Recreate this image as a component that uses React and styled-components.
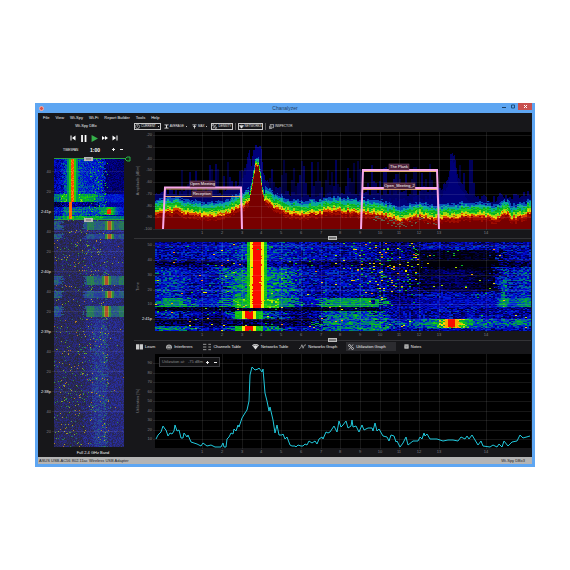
import React from "react";
import styled, { createGlobalStyle } from "styled-components";

const channels = [
	[1, 47],
	[2, 67],
	[3, 87],
	[4, 106],
	[5, 126],
	[6, 146],
	[7, 166],
	[8, 185],
	[9, 205],
	[10, 225],
	[11, 244],
	[12, 264],
	[13, 284],
	[14, 331],
];

const menuItems = ["File", "View", "Wi-Spy", "Wi-Fi", "Report Builder", "Tools", "Help"];

// helpers

// repeatable noise, so every render draws the same signal
function noise(x, y, seed = 0) {
	let h = (x * 374761393 + y * 668265263 + seed * 974634777) | 0;
	h = Math.imul(h ^ (h >>> 13), 1274126177);
	h = Math.imul(h ^ (h >>> 15), 2246822519);
	return ((h ^ (h >>> 16)) >>> 0) / 4294967296;
}

function curve(points, x) {
	if (x <= points[0][0]) return points[0][1];
	for (let i = 1; i < points.length; i++) {
		const [x0, y0] = points[i - 1];
		const [x1, y1] = points[i];
		if (x <= x1) return y0 + ((y1 - y0) * (x - x0)) / (x1 - x0);
	}
	return points[points.length - 1][1];
}

const within = (v, a, b) => v >= a && v < b;
const bump = (x, c, w) => Math.exp(-((x - c) * (x - c)) / (w * w));

const stops = [
	[0, [0, 0, 8]],
	[0.12, [0, 0, 70]],
	[0.25, [0, 0, 165]],
	[0.36, [0, 20, 225]],
	[0.46, [0, 100, 160]],
	[0.56, [0, 160, 70]],
	[0.68, [20, 205, 10]],
	[0.78, [240, 240, 0]],
	[0.88, [255, 130, 0]],
	[1, [250, 10, 0]],
];

function heat(v) {
	const rgb = [0, 1, 2].map((i) =>
		Math.round(curve(stops.map(([s, c]) => [s, c[i]]), v))
	);
	return `rgb(${rgb.join(",")})`;
}

const heatCache = {};
function heatColor(v) {
	const key = Math.round(Math.max(0, Math.min(1, v)) * 32);
	if (!heatCache[key]) heatCache[key] = heat(key / 32);
	return heatCache[key];
}

// one path per colour, equal neighbours in a row are joined
function buildRaster(width, height, colorAt) {
	const paths = {};
	for (let y = 0; y < height; y++) {
		let start = 0;
		let color = colorAt(0, y);
		for (let x = 1; x <= width; x++) {
			const next = x < width ? colorAt(x, y) : null;
			if (next !== color) {
				if (color) {
					paths[color] = (paths[color] || "") + `M${start} ${y}h${x - start}v1h${start - x}z`;
				}
				start = x;
				color = next;
			}
		}
	}
	return Object.entries(paths);
}

const floorLine = [
	[0, 82], [10, 80], [22, 79], [32, 82], [45, 84], [62, 84], [72, 81], [80, 77],
	[88, 75], [94, 68], [97, 52], [98, 46], [100, 35], [103, 33], [105, 45], [107, 61],
	[109, 68], [116, 73], [126, 79], [136, 82], [150, 83], [165, 81], [180, 79],
	[192, 80], [206, 81], [222, 82], [234, 85], [246, 88], [256, 86], [264, 84],
	[275, 87], [300, 85], [330, 85], [344, 87], [349, 81], [352, 82], [355, 87],
	[365, 85], [376, 81],
];
const blueLine = [
	[0, 62], [8, 58], [24, 60], [50, 62], [70, 60], [85, 50], [91, 30], [94, 19], [96, 36],
	[98, 16], [106, 15], [108, 42], [115, 55], [140, 62], [190, 62], [245, 61], [280, 58],
	[290, 52], [294, 40], [295, 23], [299, 22], [301, 38], [305, 52], [316, 64], [340, 67],
	[346, 62], [352, 65], [365, 62], [376, 60],
];

function densityColor(x, y) {
	const col = x >> 1;
	const floor = curve(floorLine, x) + (noise(col, 1) - 0.5) * 3;
	const peak = within(x, 94, 110);
	const band = peak ? 7 : 12;
	const depth = y - floor;
	if (depth > 0) {
		if (x > 215 && x < 282 && depth < 7 && noise(col, y, 5) < 0.16) return "#60604a";
		return depth > 4 || peak ? "#780000" : noise(col, y, 3) > 0.5 ? "#a00c00" : "#8a0000";
	}
	const v = -depth + (noise(col, y, 2) - 0.5) * 3;
	if (v < band * 0.14) return "#d84000";
	if (v < band * 0.26) return "#e8d000";
	if (v < band * 0.4) return "#98d810";
	if (v < band * 0.76) return noise(col, y, 8) > 0.4 ? "#08b020" : "#20cc28";
	if (v < band) return "#08a898";
	if (v < band * 1.2) return "#0850b8";
	const top = curve(blueLine, x) + (noise(col, 7) - 0.5) * 6;
	if (y > top) return y > top + 7 || peak ? "#000078" : "#000064";
	const inSpikes = within(x, 26, 90) || within(x, 110, 284) || within(x, 304, 322);
	if (inSpikes && noise(col, 11) > 0.38 && y > 27 + noise(col, 12) * 28) {
		return noise(col, 14) > 0.5 ? "#00005a" : "#00003c";
	}
	return null;
}

function waterfallColor(px, y) {
	const n = noise(px >> 1, y, 21);
	const n2 = noise(px, y, 22);
	const row = noise(3, y, 23);
	// ragged borders between the busy and the quiet areas
	const x = px + (noise(px >> 2, y, 24) - 0.5) * 22;
	let v = 0.26 + (row - 0.5) * 0.1;
	let amp = 0.32;

	if (y < 56) {
		v += 0.12 * bump(x, 104, 38);
		if (y > 25) v += within(x, 70, 136) ? 0.13 : within(x, 0, 26) ? 0.1 : 0;
		if (within(y, 18, 25)) v -= 0.11;
		if (x > 225 && x < 265) v -= 0.09;
		if (within(x, 262, 343) && within(y, 8, 50)) {
			v -= within(x, 272, 320) && y > 26 ? 0.14 : 0.22;
			amp = 0.18;
		}
		if (y > 24) v += 0.16 * bump(px, 348, 5) + 0.1 * bump(px, 370, 10);
	} else if (y < 65) {
		v += within(x, 0, 34) || within(x, 70, 140) ? 0.27 : 0.02;
		if (within(x, 34, 70)) v += 0.06;
		if (within(x, 165, 226)) v += 0.27;
		if (within(x, 226, 262)) v -= 0.08;
		v += 0.28 * bump(px, 348, 6) + 0.26 * bump(px, 370, 12);
		amp = 0.2;
	} else if (y < 69) {
		v -= x < 225 ? 0.22 : 0.03;
	} else if (y < 77) {
		v += within(x, 0, 30) ? 0.14 : 0;
		v += within(x, 75, 126) ? 0.2 : 0;
		v += within(x, 170, 225) ? 0.2 : 0;
		if (row > 0.5 && x < 165) v -= 0.13;
	} else if (y < 84) {
		if (x < 165) v -= 0.16;
		if (within(x, 165, 230)) v += 0.2;
		if (x > 225) v += 0.16 * bump(x, 370, 20);
	} else {
		v += within(x, 0, 35) || within(x, 75, 126) ? 0.22 : 0;
		if (within(x, 170, 230)) v += 0.2;
	}
	if (within(y, 77, 86) && px > 215) v += 0.24 * bump(px, 297, 60) + 0.34 * bump(px, 297, 14);

	v += (n - 0.5) * amp;

	if (y < 66) {
		const d = Math.abs(px - 101.5);
		if (d < 4 + (n2 > 0.8 ? 1 : 0)) v = 1;
		else if (d < 7) v = 0.79;
		else if (d < 10) v = 0.6 + n * 0.1;
		else if (y > 56 && d < 22) v = 0.64 + (n - 0.5) * 0.25;
	} else if (within(y, 69, 77) || y > 83) {
		const d = Math.abs(px - 93.5);
		if (d < 4) v = 1;
		else if (d < 7) v = 0.78;
		else if (d < 14) v = 0.58 + n * 0.12;
	}
	if (within(y, 77, 85)) {
		const d = Math.abs(px - 296);
		if (d < 4) v = 1;
		else if (d < 7) v = 0.84;
	}

	const spark = noise(px >> 1, y, 31);
	const busy = within(x, 190, 265) && y < 50 ? 0.07 : x > 262 ? 0.006 : 0.012;
	if (spark < busy) return heatColor(0.55 + noise(px >> 1, y, 32) * 0.35);
	return heatColor(v);
}

function overviewColor(px, y) {
	const n = noise(px, y, 41);
	const x = px + (noise(px >> 1, y, 42) - 0.5) * 5;
	let v = 0.27;
	let amp = 0.22;
	if (y < 61) {
		if (within(x, 8, 30)) v += 0.14;
		if (within(x, 30, 50)) v += 0.1;
		if (x > 50) {
			v -= y < 36 ? 0.09 : 0;
			amp = 0.12;
		}
		if (within(y, 36, 44)) v += x < 42 ? 0.22 : 0.08;
		if (within(y, 44, 49)) v -= x < 44 ? 0.16 : 0;
		if (within(y, 49, 57)) v += 0.06 + 0.35 * bump(px, 55, 7);
		if (y > 57) v += 0.22;
		v += (n - 0.5) * amp;
		const d = Math.abs(px - (y < 44 ? 18 : 16));
		if (y < 44 || y > 57) {
			if (d < 2) v = n > 0.5 ? 0.94 : 0.86;
			else if (d < 4) v = 0.68;
			else if (d < 6) v = 0.54;
		} else if (d < 2) v = 0.9;
		if (within(y, 51, 56) && within(px, 53, 57)) v = 0.97;
		if (within(px, 34, 54) && n > 0.94) v = 0.68;
		return heatColor(v);
	}
	const bands = [
		[63, 72, 1],
		[76, 81, 0.4],
		[118, 127, 1],
		[133, 140, 0.5],
		[148, 159, 1],
	];
	const hit = bands.find(([a, b]) => within(y, a, b));
	v = 0.14 + (x > 50 ? 0.09 : 0);
	if (within(x, 30, 52)) v += 0.07;
	if (y > 160 && within(x, 38, 52)) v += 0.12;
	v += (n - 0.5) * 0.26;
	if (hit) {
		const s = hit[2];
		const late = y > 115;
		const center = late && s === 1 ? 52 : 55;
		if (x < 8) v = 0.34 + n * 0.2;
		if (x >= 30) v = 0.36 + 0.1 * s + (n - 0.5) * 0.12;
		if (within(px, 33, 40)) v += 0.1 * s;
		if (px > 64) v += 0.08 * s;
		if (Math.abs(px - center) < 5) v = 0.64;
		if (Math.abs(px - center) < 3) v = 0.76;
		if (Math.abs(px - center) < 2) v = 0.95;
		return heatColor(v);
	}
	const limit = x < 53 ? 0.045 : 0.008;
	if (noise(px, y, 43) < limit) v = 0.5 + noise(px, y, 44) * 0.4;
	return heatColor(v);
}

const densityCells = buildRaster(376, 97, densityColor);
const waterfallCells = buildRaster(376, 89, waterfallColor);
const overviewCells = buildRaster(70, 289, overviewColor);

const utilization =
	"1,85 3,81 6,78 8,72 10,75 11,76 13,82 15,79 17,80 19,77 20,71 22,77 24,76 26,84 28,84 29,79 32,83 33,81 36,88 39,89 42,90 46,92 48,89 52,92 56,91 60,93 65,93 66,93 68,89 69,93 71,93 72,85 74,83 76,79 78,80 79,75 81,77 83,71 84,73 87,64 90,59 92,56 94,47 95,21 97,13 100,16 103,15 104,14 107,18 108,15 110,39 112,47 114,57 115,53 118,66 120,79 122,71 124,81 127,81 128,80 130,85 132,83 135,91 137,92 140,92 141,93 143,91 146,92 148,92 150,90 152,91 154,87 157,89 160,87 162,90 164,85 167,83 168,85 171,78 173,79 175,78 179,72 182,78 184,67 186,73 188,71 191,67 193,74 196,72 197,66 198,73 201,72 204,78 207,71 209,76 213,74 217,74 218,77 220,69 222,77 224,75 228,82 232,83 234,87 236,81 239,82 241,88 242,87 245,93 248,89 251,83 253,91 258,87 263,87 265,83 267,85 269,79 270,82 272,80 275,85 282,85 288,87 293,86 298,86 303,87 306,83 310,85 312,82 314,85 317,81 320,86 323,91 326,87 328,92 335,93 338,91 342,93 344,90 347,93 349,87 353,92 357,88 362,87 365,81 368,84 375,82";

const networks = [
	{ name: "Open Meeting", x: 35, y: 49, w: 25 },
	{ name: "Reception", x: 37, y: 59, w: 20 },
	{ name: "The Plank", x: 234, y: 32, w: 20 },
	{ name: "Open_Meeting_2", x: 229, y: 51, w: 31 },
];

// charts

function Cells({ cells }) {
	return (
		<g shapeRendering="crispEdges">
			{cells.map(([color, d]) => (
				<path key={color} d={d} fill={color} />
			))}
		</g>
	);
}

function Axes({ height, rows, unit, label }) {
	return (
		<g>
			<g stroke="#fff" strokeOpacity="0.09" shapeRendering="crispEdges">
				{rows.map(([text, y]) => (
					<path key={text} d={`M-2 ${y}H376`} />
				))}
				{channels.map(([ch, x]) => (
					<path key={ch} d={`M${x} 0V${height + 1}`} />
				))}
			</g>
			{rows.map(([text, y]) => (
				<AxisText key={text} x="-3" y={y + 1} textAnchor="end" $bright={text === unit}>
					{text}
				</AxisText>
			))}
			{channels.map(([ch, x]) => (
				<AxisText key={ch} x={x} y={height + 5} textAnchor="middle">
					{ch}
				</AxisText>
			))}
			<AxisText transform={`translate(-16 ${height / 2}) rotate(-90)`} textAnchor="middle">
				{label}
			</AxisText>
		</g>
	);
}

function DensityChart() {
	const rows = [-20, -30, -40, -50, -60, -70, -80, -90, -100].map((v, i) => [
		v,
		Math.round(3 + i * 11.75),
	]);
	return (
		<Chart viewBox="-21 -1 397 105" role="img" aria-label="Density">
			<rect width="376" height="97" fill="#000" />
			<Cells cells={densityCells} />
			<Axes height={97} rows={rows} label="Amplitude [dBm]" />
			<g fill="none" stroke="#e5b070">
				<path d="M10 57H86M10 64.5H86M207 39.5H282M207 57.5H282" />
			</g>
			<g fill="none" stroke="#f9a8ea" strokeWidth="2">
				<path d="M8 97L10 55.5H86L87 97" />
				<path d="M206 97L208 38H282L284 97M207 56H282" />
			</g>
			{networks.map(({ name, x, y, w }) => (
				<g key={name}>
					<rect x={x} y={y} width={w} height="6" fill="#4a2038" stroke="#80506c" strokeWidth="0.5" />
					<NetworkText x={x + w / 2} y={y + 4} textAnchor="middle">
						{name}
					</NetworkText>
				</g>
			))}
		</Chart>
	);
}

function WaterfallChart() {
	const rows = [[50, 3], [40, 18], [30, 33], [20, 48], [10, 62], ["2:41p", 77]];
	return (
		<Chart viewBox="-21 -2 397 98" role="img" aria-label="Waterfall">
			<Cells cells={waterfallCells} />
			<Axes height={89} rows={rows} unit="2:41p" label="Time" />
		</Chart>
	);
}

function UtilizationChart() {
	const rows = [90, 80, 70, 60, 50, 40, 30, 20, 10].map((v, i) => [v, Math.round(9 + i * 9.5)]);
	return (
		<Chart viewBox="-21 -2 397 105" role="img" aria-label="Utilization">
			<rect width="376" height="94" fill="#000" />
			<Axes height={94} rows={rows} label="Utilization [%]" />
			<polyline points={utilization} fill="none" stroke="#20c8dc" />
		</Chart>
	);
}

function Overview() {
	const labels = ["40", "20", "2:41p", "40", "20", "2:40p", "40", "20", "2:39p", "40", "20", "2:38p", "40", "20"];
	return (
		<Chart viewBox="-16 -3 96 293" role="img" aria-label="Session overview">
			<Cells cells={overviewCells} />
			<rect y="62" width="70" height="227" fill="#58585f" fillOpacity="0.46" />
			{labels.map((text, i) => (
				<g key={i}>
					<path d={`M-2 ${13.5 + i * 20}H70`} stroke="#fff" strokeOpacity="0.08" />
					<AxisText x="-3" y={15 + i * 20} textAnchor="end" $bright={text.includes("p")}>
						{text}
					</AxisText>
				</g>
			))}
			<path d="M0 0.5H73M0 61.5H70" stroke="#28a040" />
			<path d="M76 -1H73L71 1L73 3H76Z" fill="#102c18" stroke="#28b048" />
			<g fill="#b8b8b8">
				<rect x="30" y="-1" width="9" height="4" />
				<rect x="30" y="60" width="9" height="4" />
			</g>
			<path d="M32 1H37M32 62H37" stroke="#666" />
		</Chart>
	);
}

// icons

const icons = {
	clock: (
		<g fill="none" stroke="#ddd" strokeWidth="1.4">
			<circle cx="6" cy="6" r="5" />
			<path d="M6 3V6L8 8" />
		</g>
	),
	average: <path d="M1 1H11V3H8L7 6L8 9H11V11H1V9H4L5 6L4 3H1Z" fill="#ddd" />,
	max: <path d="M1 1H11V3H1ZM6 3L10 7H7V11H5V7H2Z" fill="#ddd" />,
	percent: (
		<g fill="none" stroke="#ddd" strokeWidth="1.5">
			<circle cx="3" cy="3" r="2" />
			<circle cx="9" cy="9" r="2" />
			<path d="M10 1L2 11" />
		</g>
	),
	wifi: (
		<g fill="#ddd">
			<path d="M0 4Q6 -1 12 4L6 11Z" />
			<path d="M2 5Q6 2 10 5" fill="none" stroke="#333" />
		</g>
	),
	inspector: (
		<g fill="none" stroke="#ddd" strokeWidth="1.5">
			<path d="M3 1H11V9H3Z" />
			<path d="M1 5V11H7M5 5H8" />
		</g>
	),
	book: (
		<g fill="#ccc">
			<path d="M0 2H5.5V11H0ZM6.5 2H12V11H6.5Z" />
		</g>
	),
	interferer: (
		<g>
			<path d="M0 7A6 6 0 0 1 12 7V9H0Z" fill="#aaa" />
			<path d="M3 7A3 3 0 0 1 9 7M2 11H10" fill="none" stroke="#555" strokeWidth="1.4" />
		</g>
	),
	list: <path d="M0 2H5M0 6H5M0 10H5M8 2H12M8 6H12M8 10H12" stroke="#aaa" strokeWidth="1.3" />,
	graph: <path d="M0 10L3 8L5 3L7 9L9 4L12 3" fill="none" stroke="#bbb" strokeWidth="1.2" />,
	notes: (
		<g>
			<path d="M1 1H11V11H1Z" fill="#ddd" />
			<path d="M1 3H11M3 6H9M3 8H9" stroke="#333" />
		</g>
	),
	prev: <path d="M1 1H3V11H1ZM11 1V11L4 6Z" fill="#fff" />,
	pause: <path d="M2 0H5V12H2ZM8 0H11V12H8Z" fill="#fff" />,
	play: <path d="M1 0L12 6L1 12Z" fill="#35b04a" />,
	forward: <path d="M0 2L6 6L0 10ZM6 2L12 6L6 10Z" fill="#fff" />,
	next: <path d="M1 1L8 6L1 11ZM9 1H11V11H9Z" fill="#fff" />,
};

function Icon({ name, size = 5 }) {
	return (
		<svg width={size} height={size} viewBox="0 0 12 12" aria-hidden="true">
			{icons[name]}
		</svg>
	);
}

function Stepper() {
	return (
		<Steps>
			<PlainButton aria-label="Increase">
				<svg width="3" height="3" viewBox="0 0 3 3">
					<path d="M1.5 0V3M0 1.5H3" stroke="#eee" />
				</svg>
			</PlainButton>
			<PlainButton aria-label="Decrease">
				<svg width="3" height="3" viewBox="0 0 3 3">
					<path d="M0 1.5H3" stroke="#eee" />
				</svg>
			</PlainButton>
		</Steps>
	);
}

function Divide() {
	return (
		<Splitter>
			<Grip />
		</Splitter>
	);
}

function App() {
	return (
		<Page>
			<GlobalStyle />
			<Window>
				<TitleBar>
					<AppMark />
					<h1>Chanalyzer</h1>
					<WindowButtons>
						<WindowButton aria-label="Minimize">
							<svg width="4" height="5" viewBox="0 0 4 5">
								<path d="M0 3.5H4" stroke="#1c3f66" />
							</svg>
						</WindowButton>
						<WindowButton aria-label="Maximize">
							<svg width="4" height="5" viewBox="0 0 4 5">
								<path d="M0.5 1H3.5V4H0.5Z" fill="none" stroke="#1c4f7c" />
							</svg>
						</WindowButton>
						<WindowButton aria-label="Close" $close>
							<svg width="3" height="3" viewBox="0 0 3 3">
								<path d="M0 0L3 3M3 0L0 3" stroke="#fff" />
							</svg>
						</WindowButton>
					</WindowButtons>
				</TitleBar>
				<Content>
					<Menu>
						{menuItems.map((item) => (
							<PlainButton key={item}>{item}</PlainButton>
						))}
					</Menu>
					<Columns>
						<Sidebar>
							<Device>Wi-Spy DBx</Device>
							<Player>
								<PlainButton aria-label="Previous"><Icon name="prev" size={6} /></PlainButton>
								<PlainButton aria-label="Pause"><Icon name="pause" size={7} /></PlainButton>
								<PlainButton aria-label="Play"><Icon name="play" size={7} /></PlainButton>
								<PlainButton aria-label="Fast forward"><Icon name="forward" size={6} /></PlainButton>
								<PlainButton aria-label="Next"><Icon name="next" size={6} /></PlainButton>
							</Player>
							<Timespan>
								<small>TIMESPAN</small>
								<strong>1:00</strong>
								<Stepper />
							</Timespan>
							<Overview />
							<Band>Full 2.4 GHz Band</Band>
						</Sidebar>
						<Main>
							<Toolbar>
								<Tool $boxed><Icon name="clock" />CURRENT<Caret /></Tool>
								<Tool><Icon name="average" />AVERAGE<Caret /></Tool>
								<Tool><Icon name="max" />MAX<Caret /></Tool>
								<Tool $boxed><Icon name="percent" />DENSITY</Tool>
								<Divider />
								<Tool $boxed><Icon name="wifi" />NETWORKS</Tool>
								<Divider />
								<Tool><Icon name="inspector" />INSPECTOR</Tool>
							</Toolbar>
							<DensityChart />
							<Divide />
							<WaterfallChart />
							<Divide />
							<Tabs>
								<Tab><Icon name="book" size={7} />Learn</Tab>
								<Tab><Icon name="interferer" size={6} />Interferers</Tab>
								<Tab><Icon name="list" size={8} />Channels Table</Tab>
								<Tab><Icon name="wifi" size={7} />Networks Table</Tab>
								<Tab><Icon name="graph" size={7} />Networks Graph</Tab>
								<Tab $active><Icon name="percent" size={6} />Utilization Graph</Tab>
								<Tab><Icon name="notes" />Notes</Tab>
							</Tabs>
							<ChartArea>
								<UtilizationChart />
								<Threshold>
									<span>Utilization at:</span>
									<span>-75 dBm</span>
									<Stepper />
								</Threshold>
							</ChartArea>
						</Main>
					</Columns>
				</Content>
				<StatusBar>
					<span>ASUS USB-AC56 802.11ac Wireless USB Adapter</span>
					<span>Wi-Spy DBx3</span>
				</StatusBar>
			</Window>
		</Page>
	);
}

const GlobalStyle = createGlobalStyle`
	* {
		box-sizing: border-box;
	}
	body {
		margin: 0;
		background: #fff;
	}
	button {
		font-family: inherit;
	}
	svg {
		display: block;
		flex: none;
	}
`;

const Page = styled.div`
	padding: 103px 35px;
`;
const Window = styled.div`
	background: #5ea6f2;
	padding: 0 3px 3px;
	color: #f0f0f0;
	font-family: "Liberation Sans", sans-serif;
	font-size: 4px;
	line-height: 6px;
`;
const TitleBar = styled.header`
	display: grid;
	grid-template-columns: 1fr auto 1fr;
	align-items: center;
	height: 10px;
	h1 {
		margin: 0;
		color: #24405f;
		font-size: 5px;
		font-weight: 400;
	}
`;
const AppMark = styled.span`
	width: 5px;
	height: 5px;
	margin-left: 1px;
	border: 1px solid #f6b0a8;
	border-radius: 50%;
	background: #d85048;
`;
const WindowButtons = styled.div`
	display: flex;
	justify-content: flex-end;
	align-self: start;
	gap: 2px;
`;
const WindowButton = styled.button`
	display: flex;
	align-items: center;
	justify-content: center;
	width: ${(props) => (props.$close ? "14px" : "7px")};
	height: 7px;
	padding: 0;
	border: none;
	background: ${(props) => (props.$close ? "#c8504e" : "transparent")};
`;
const Content = styled.div`
	background: #17171a;
	padding-right: 1px;
`;
const PlainButton = styled.button`
	padding: 0;
	border: none;
	background: none;
	color: inherit;
	font-size: 4px;
	line-height: 6px;
	cursor: pointer;
`;
const Menu = styled.nav`
	display: flex;
	gap: 6px;
	padding: 2px 5px 0;
	height: 8px;
`;
const Columns = styled.div`
	display: grid;
	grid-template-columns: 96px 1fr;
`;
const Sidebar = styled.aside`
	display: flex;
	flex-direction: column;
	text-align: center;
`;
const Device = styled.div`
	padding-top: 2px;
	height: 11px;
`;
const Player = styled.div`
	display: flex;
	align-items: center;
	justify-content: center;
	gap: 4px;
	height: 12px;
	padding-left: 15px;
`;
const Timespan = styled.div`
	display: flex;
	align-items: center;
	justify-content: space-between;
	height: 11px;
	padding: 0 11px 0 25px;
	small {
		font-size: 3px;
	}
	strong {
		color: #fff;
		font-size: 5px;
	}
`;
const Steps = styled.span`
	display: flex;
	gap: 5px;
`;
const Band = styled.div`
	padding-left: 14px;
	line-height: 9px;
`;
const Main = styled.main`
	min-width: 0;
`;
const Toolbar = styled.div`
	display: flex;
	align-items: center;
	gap: 2px;
	height: 10px;
`;
const Tool = styled.button`
	display: flex;
	align-items: center;
	gap: 1px;
	height: 7px;
	padding: 0;
	border: 1px solid ${(props) => (props.$boxed ? "#c8c8c8" : "transparent")};
	background: none;
	color: #e4e4e4;
	font-size: 3px;
	line-height: 5px;
	cursor: pointer;
`;
const Caret = styled.span`
	width: 1px;
	height: 1px;
	margin: 0 1px;
	background: #bbb;
`;
const Divider = styled.span`
	width: 1px;
	height: 7px;
	background: #555;
`;
const Chart = styled.svg`
	width: 100%;
	height: auto;
`;
const AxisText = styled.text`
	fill: ${(props) => (props.$bright ? "#f0f0f0" : "#808084")};
	font-size: 4px;
`;
const NetworkText = styled.text`
	fill: #fff;
	font-size: 4px;
`;
const Splitter = styled.div`
	display: flex;
	align-items: center;
	height: 4px;
	&::before,
	&::after {
		content: "";
		flex: 1;
		height: 1px;
		background: #333336;
	}
`;
const Grip = styled.span`
	width: 9px;
	height: 4px;
	border: 1px solid #bdbdbd;
	background: #777;
`;
const Tabs = styled.div`
	display: flex;
	gap: 6px;
	height: 10px;
`;
const Tab = styled.button`
	display: flex;
	align-items: center;
	gap: 2px;
	height: 9px;
	padding: 0 ${(props) => (props.$active ? "10px" : "3px")} 0 2px;
	border: none;
	background: ${(props) => (props.$active ? "#2c2c30" : "none")};
	color: #f0f0f0;
	font-size: 4px;
	line-height: 6px;
	cursor: pointer;
`;
const ChartArea = styled.div`
	position: relative;
`;
const Threshold = styled.div`
	position: absolute;
	top: 5px;
	left: 25px;
	display: flex;
	align-items: center;
	gap: 3px;
	height: 10px;
	padding: 0 2px;
	border: 1px solid #3c3c40;
	background: #111113;
	color: #88888c;
`;
const StatusBar = styled.footer`
	display: flex;
	align-items: center;
	justify-content: space-between;
	height: 7px;
	padding: 0 7px 0 1px;
	background: #b4b4b4;
	color: #202020;
`;

export default App;
